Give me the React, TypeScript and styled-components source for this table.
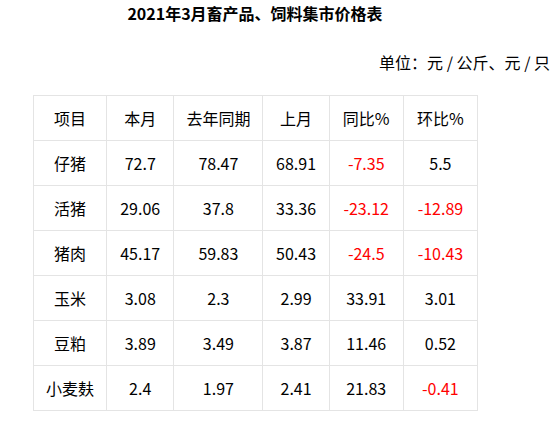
import React from 'react';
import styled, { createGlobalStyle } from 'styled-components';

const GlobalStyle = createGlobalStyle`
  html, body {
    margin: 0;
    padding: 0;
    background: #ffffff;
  }
  body {
    font-family: "Noto Sans CJK SC", "Noto Sans", sans-serif;
    color: #000;
  }
`;

const Page = styled.div`
  width: 559px;
  display: flex;
  flex-direction: column;
`;

const Title = styled.h1`
  margin: 0 0 0 33px;
  width: 444px;
  padding-top: 3px;
  font-size: 16px;
  line-height: 20px;
  font-weight: bold;
  text-align: center;
  color: #000;
`;

const Unit = styled.div`
  margin-top: 29px;
  padding-right: 9px;
  font-size: 16px;
  line-height: 20px;
  text-align: right;
  color: #000;
`;

const Table = styled.table`
  margin: 23px 0 0 33px;
  border-collapse: collapse;
  table-layout: fixed;
  width: 445px;
`;

const Cell = styled.td<{ $red?: boolean }>`
  border: 1px solid #e4e4e4;
  height: 44px;
  padding: 0;
  font-size: 16px;
  text-align: center;
  vertical-align: middle;
  color: ${p => (p.$red ? '#ff0000' : '#000')};
`;

const widths = [73, 67, 89, 66, 74, 74];

const header = ['项目', '本月', '去年同期', '上月', '同比%', '环比%'];

const rows: string[][] = [
  ['仔猪', '72.7', '78.47', '68.91', '-7.35', '5.5'],
  ['活猪', '29.06', '37.8', '33.36', '-23.12', '-12.89'],
  ['猪肉', '45.17', '59.83', '50.43', '-24.5', '-10.43'],
  ['玉米', '3.08', '2.3', '2.99', '33.91', '3.01'],
  ['豆粕', '3.89', '3.49', '3.87', '11.46', '0.52'],
  ['小麦麸', '2.4', '1.97', '2.41', '21.83', '-0.41'],
];

const App: React.FC = () => {
  return (
    <Page>
      <GlobalStyle />
      <Title>2021年3月畜产品、饲料集市价格表</Title>
      <Unit>单位：元 / 公斤、元 / 只</Unit>
      <Table>
        <colgroup>
          {widths.map((w, i) => (
            <col key={i} style={{ width: w }} />
          ))}
        </colgroup>
        <tbody>
          <tr>
            {header.map(h => (
              <Cell key={h}>{h}</Cell>
            ))}
          </tr>
          {rows.map(r => (
            <tr key={r[0]}>
              {r.map((v, i) => (
                <Cell key={i} $red={i >= 4 && v.startsWith('-')}>
                  {v}
                </Cell>
              ))}
            </tr>
          ))}
        </tbody>
      </Table>
    </Page>
  );
};

export default App;
